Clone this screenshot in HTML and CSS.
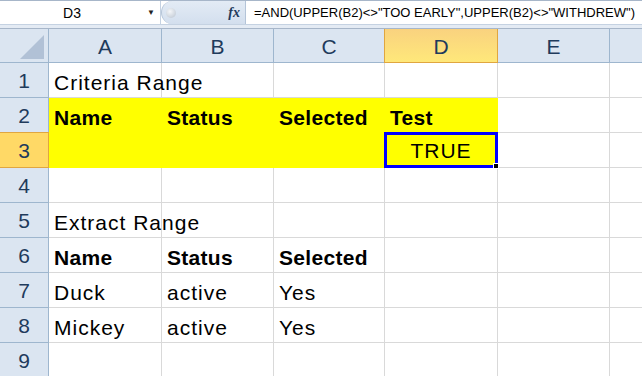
FILE: index.html
```html
<!DOCTYPE html>
<html lang="en">
<head>
    <meta charset="UTF-8">
    <title>Advanced Filter - Criteria Range</title>
    <link rel="stylesheet" href="styles.css">
</head>
<body>
    <div class="formula-bar">
        <div class="name-box">
            <span class="cell-ref">D3</span>
            <span class="drop">&#9660;</span>
        </div>
        <div class="fx-area">
            <span class="knob"></span>
            <span class="fx">fx</span>
        </div>
        <div class="formula">=AND(UPPER(B2)&lt;&gt;"TOO EARLY",UPPER(B2)&lt;&gt;"WITHDREW")</div>
    </div>
    <div class="bar-gap"></div>

    <div class="sheet">
        <!-- column headers -->
        <div class="corner"><span class="tri"></span></div>
        <div class="col-head">A</div>
        <div class="col-head">B</div>
        <div class="col-head">C</div>
        <div class="col-head active">D</div>
        <div class="col-head">E</div>
        <div class="col-head last"></div>

        <!-- row 1 -->
        <div class="row-head">1</div>
        <div class="cell">Criteria Range</div>
        <div class="cell"></div><div class="cell"></div><div class="cell"></div><div class="cell"></div><div class="cell last"></div>

        <!-- row 2 -->
        <div class="row-head">2</div>
        <div class="cell fill bold">Name</div>
        <div class="cell fill bold">Status</div>
        <div class="cell fill bold">Selected</div>
        <div class="cell fill bold">Test</div>
        <div class="cell"></div><div class="cell last"></div>

        <!-- row 3 -->
        <div class="row-head active">3</div>
        <div class="cell fill"></div>
        <div class="cell fill"></div>
        <div class="cell fill"></div>
        <div class="cell fill selected"><span class="val">TRUE</span><span class="handle"></span></div>
        <div class="cell"></div><div class="cell last"></div>

        <!-- row 4 -->
        <div class="row-head">4</div>
        <div class="cell"></div><div class="cell"></div><div class="cell"></div><div class="cell"></div><div class="cell"></div><div class="cell last"></div>

        <!-- row 5 -->
        <div class="row-head">5</div>
        <div class="cell">Extract Range</div>
        <div class="cell"></div><div class="cell"></div><div class="cell"></div><div class="cell"></div><div class="cell last"></div>

        <!-- row 6 -->
        <div class="row-head">6</div>
        <div class="cell bold">Name</div>
        <div class="cell bold">Status</div>
        <div class="cell bold">Selected</div>
        <div class="cell"></div><div class="cell"></div><div class="cell last"></div>

        <!-- row 7 -->
        <div class="row-head">7</div>
        <div class="cell">Duck</div>
        <div class="cell">active</div>
        <div class="cell">Yes</div>
        <div class="cell"></div><div class="cell"></div><div class="cell last"></div>

        <!-- row 8 -->
        <div class="row-head">8</div>
        <div class="cell">Mickey</div>
        <div class="cell">active</div>
        <div class="cell">Yes</div>
        <div class="cell"></div><div class="cell"></div><div class="cell last"></div>

        <!-- row 9 -->
        <div class="row-head">9</div>
        <div class="cell"></div><div class="cell"></div><div class="cell"></div><div class="cell"></div><div class="cell"></div><div class="cell last"></div>
    </div>
</body>
</html>
```

FILE: styles.css
```css
:root {
    --head-bg: #dbe5f1;
    --head-line: #9eb6ce;
    --head-text: #1f3b5c;
    --grid: #d9d9d9;
    --fill: #ffff00;
}
* { box-sizing: border-box; }
body { margin: 0; background: #fff; font-family: 'Liberation Sans', Arial, sans-serif; overflow: hidden; width: 642px; height: 376px; }

/* Formula bar */
.formula-bar { display: flex; height: 25px; border-top: 1px solid #a7b6c9; border-bottom: 1px solid #c5d2e2; background: #fff; }
.name-box { width: 161px; display: flex; align-items: center; border-right: 1px solid #c5d2e2; }
.cell-ref { width: 144px; text-align: center; font-size: 14px; color: #000; }
.drop { font-size: 8px; color: #222; margin-left: 3px; }
.fx-area { width: 84px; display: flex; align-items: center; justify-content: space-between; padding: 0 5px 0 4px; background: linear-gradient(#e3ebf5, #d3dfee); border-radius: 12px 0 0 12px; border-left: 1px solid #b4c4d8; }
.knob { width: 10px; height: 10px; border-radius: 50%; background: radial-gradient(circle at 40% 35%, #f4f6f9, #b9c3cf); }
.fx { font-family: 'Liberation Serif', serif; font-style: italic; font-weight: bold; font-size: 14px; color: #1f3b5c; }
.formula { flex: 1; border-left: 1px solid #b4c4d8; padding: 4px 0 0 8px; font-size: 13px; color: #000; white-space: nowrap; overflow: hidden; }
.bar-gap { height: 4px; background: #e4ebf4; border-bottom: 1px solid #a7b6c9; }

/* Sheet grid */
.sheet { display: grid; grid-template-columns: 49px 113px 112px 111px 113px 112px 1fr; grid-template-rows: 34px repeat(9, 35px); }
.corner, .col-head, .row-head { background: var(--head-bg); color: var(--head-text); display: flex; align-items: center; justify-content: center; font-size: 21px; }
.corner { border-right: 1px solid var(--head-line); border-bottom: 1px solid var(--head-line); position: relative; }
.tri { position: absolute; right: 4px; bottom: 3px; width: 0; height: 0; border-left: 24px solid transparent; border-bottom: 24px solid #b1c1d6; }
.col-head { border-right: 1px solid var(--head-line); border-bottom: 1px solid var(--head-line); padding-top: 2px; }
.col-head.active { background: linear-gradient(#f9d27f, #ffe87a); border-color: #e0a640; border-left: 1px solid #e0a640; margin-left: -1px; }
.col-head.last { border-right: none; }
.row-head { border-right: 1px solid var(--head-line); border-bottom: 1px solid var(--head-line); padding-top: 2px; }
.row-head.active { background: #ffd966; border-color: #e0a640; border-top: 1px solid #e0a640; margin-top: -1px; }

.cell { border-right: 1px solid var(--grid); border-bottom: 1px solid var(--grid); font-size: 21px; letter-spacing: 1px; color: #000; padding: 8px 0 0 5px; white-space: nowrap; }
.cell.last { border-right: none; }
.cell.bold { font-weight: bold; letter-spacing: 0.3px; }
.cell.fill { background: var(--fill); border-color: var(--fill); }
.cell.selected { position: relative; border: 3px solid #0000ff; margin: -1px 0 0 -1px; display: flex; justify-content: center; padding: 4px 0 0; }
.handle { position: absolute; right: -4px; bottom: -4px; width: 6px; height: 6px; background: #000; border: 1px solid #fff; }
```
